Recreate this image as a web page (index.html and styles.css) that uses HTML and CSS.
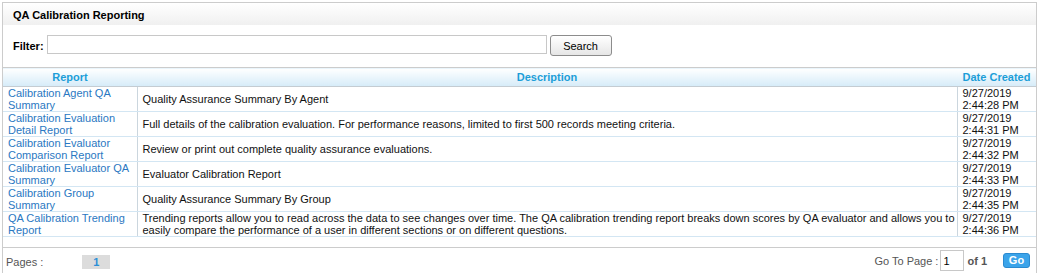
FILE: index.html
```html
<!DOCTYPE html>
<html lang="en">
<head>
  <meta charset="utf-8" />
  <title>QA Calibration Reporting</title>
  <link rel="stylesheet" href="styles.css">
</head>
<body>
  <div class="panel">
    <div class="panel-title">QA Calibration Reporting</div>

    <div class="filter-row">
      <label for="filter">Filter:</label>
      <input type="text" id="filter" class="filter-input" />
      <button type="button" class="btn-search">Search</button>
    </div>

    <table class="report-table">
      <colgroup>
        <col class="col-report" />
        <col class="col-desc" />
        <col class="col-date" />
      </colgroup>
      <thead>
        <tr>
          <th>Report</th>
          <th>Description</th>
          <th>Date Created</th>
        </tr>
      </thead>
      <tbody>
        <tr>
          <td><a href="#">Calibration Agent QA Summary</a></td>
          <td>Quality Assurance Summary By Agent</td>
          <td>9/27/2019<br/>2:44:28 PM</td>
        </tr>
        <tr>
          <td><a href="#">Calibration Evaluation Detail Report</a></td>
          <td>Full details of the calibration evaluation. For performance reasons, limited to first 500 records meeting criteria.</td>
          <td>9/27/2019<br/>2:44:31 PM</td>
        </tr>
        <tr>
          <td><a href="#">Calibration Evaluator Comparison Report</a></td>
          <td>Review or print out complete quality assurance evaluations.</td>
          <td>9/27/2019<br/>2:44:32 PM</td>
        </tr>
        <tr>
          <td><a href="#">Calibration Evaluator QA Summary</a></td>
          <td>Evaluator Calibration Report</td>
          <td>9/27/2019<br/>2:44:33 PM</td>
        </tr>
        <tr>
          <td><a href="#">Calibration Group Summary</a></td>
          <td>Quality Assurance Summary By Group</td>
          <td>9/27/2019<br/>2:44:35 PM</td>
        </tr>
        <tr>
          <td><a href="#">QA Calibration Trending Report</a></td>
          <td>Trending reports allow you to read across the data to see changes over time. The QA calibration trending report breaks down scores by QA evaluator and allows you to easily compare the performance of a user in different sections or on different questions.</td>
          <td>9/27/2019<br/>2:44:36 PM</td>
        </tr>
      </tbody>
    </table>

    <div class="pager">
      <div class="pager-left">
        <span class="pager-label">Pages :</span>
        <span class="page-num">1</span>
      </div>
      <div class="pager-right">
        <span class="pager-label">Go To Page :</span>
        <input type="text" class="page-input" value="1" />
        <span class="page-of">of 1</span>
        <button type="button" class="btn-go">Go</button>
      </div>
    </div>
  </div>
</body>
</html>
```

FILE: styles.css
```css
body {
  margin: 0;
  font-family: 'Liberation Sans', Arial, sans-serif;
  font-size: 11px;
  color: #000;
  background: #fff;
}
.panel {
  margin: 2px 3px 0 2px;
  border: 1px solid #cccccc;
  border-bottom: none;
}
.panel-title {
  font-weight: bold;
  line-height: 12px;
  padding: 6px 10px 4px;
  background: linear-gradient(#ffffff, #f0f0f0);
}
.filter-row {
  display: flex;
  align-items: center;
  padding: 10px 10px 11px;
}
.filter-row label {
  font-weight: bold;
  margin-right: 3px;
}
.filter-input {
  box-sizing: border-box;
  width: 500px;
  height: 19px;
  margin: 0 0 2px;
  border: 1px solid #c8c8c8;
  padding: 0 3px;
  font: inherit;
}
.btn-search {
  box-sizing: border-box;
  width: 62px;
  height: 21px;
  margin-left: 3px;
  border: 1px solid #8c8c8c;
  border-radius: 3px;
  background: linear-gradient(#ffffff, #e6e6e6);
  font-family: inherit;
  font-size: 11px;
  color: #000;
  padding: 0;
}
.report-table {
  width: 100%;
  table-layout: fixed;
  border-collapse: collapse;
}
.col-report { width: 134px; }
.col-desc { width: 820px; }
.report-table th {
  color: #1c9ed8;
  font-weight: bold;
  line-height: 12px;
  padding: 3px 0;
  text-align: center;
  background: linear-gradient(#ffffff, #d5ebf8);
  border-top: 1px solid #cccccc;
  border-bottom: 1px solid #c4ccd2;
}
.report-table td {
  line-height: 12px;
  height: 24px;
  padding: 0 2px 0 5px;
  vertical-align: middle;
  border-bottom: 1px solid #d3e6f3;
  color: #111;
}
.report-table td + td {
  border-left: 1px solid #cbd6de;
}
.report-table a {
  color: #2a78c2;
  text-decoration: none;
}
.pager {
  display: flex;
  justify-content: space-between;
  align-items: center;
  margin-top: 10px;
  border-top: 1px solid #cccccc;
  height: 25px;
  padding: 0 6px 0 3px;
}
.pager-left,
.pager-right {
  display: flex;
  align-items: center;
}
.pager-left {
  margin-top: 3px;
}
.pager-label {
  font-size: 11px;
  color: #555;
}
.page-num {
  display: inline-block;
  width: 28px;
  height: 14px;
  line-height: 14px;
  margin-left: 39px;
  text-align: center;
  background: #dcdcdc;
  color: #2b8fd6;
  font-weight: bold;
}
.page-input {
  box-sizing: border-box;
  width: 24px;
  height: 21px;
  margin: 0 3px 0 2px;
  border: 1px solid #c8c8c8;
  padding: 0 2px;
  font: inherit;
}
.page-of {
  font-size: 11px;
  font-weight: bold;
  color: #555;
}
.btn-go {
  box-sizing: border-box;
  width: 27px;
  height: 15px;
  margin-left: 16px;
  padding: 0;
  border: 1px solid #2b8ad0;
  border-radius: 3px;
  background: #3ba4ea;
  color: #fff;
  font-family: inherit;
  font-size: 11px;
  font-weight: bold;
  line-height: 13px;
}
```
